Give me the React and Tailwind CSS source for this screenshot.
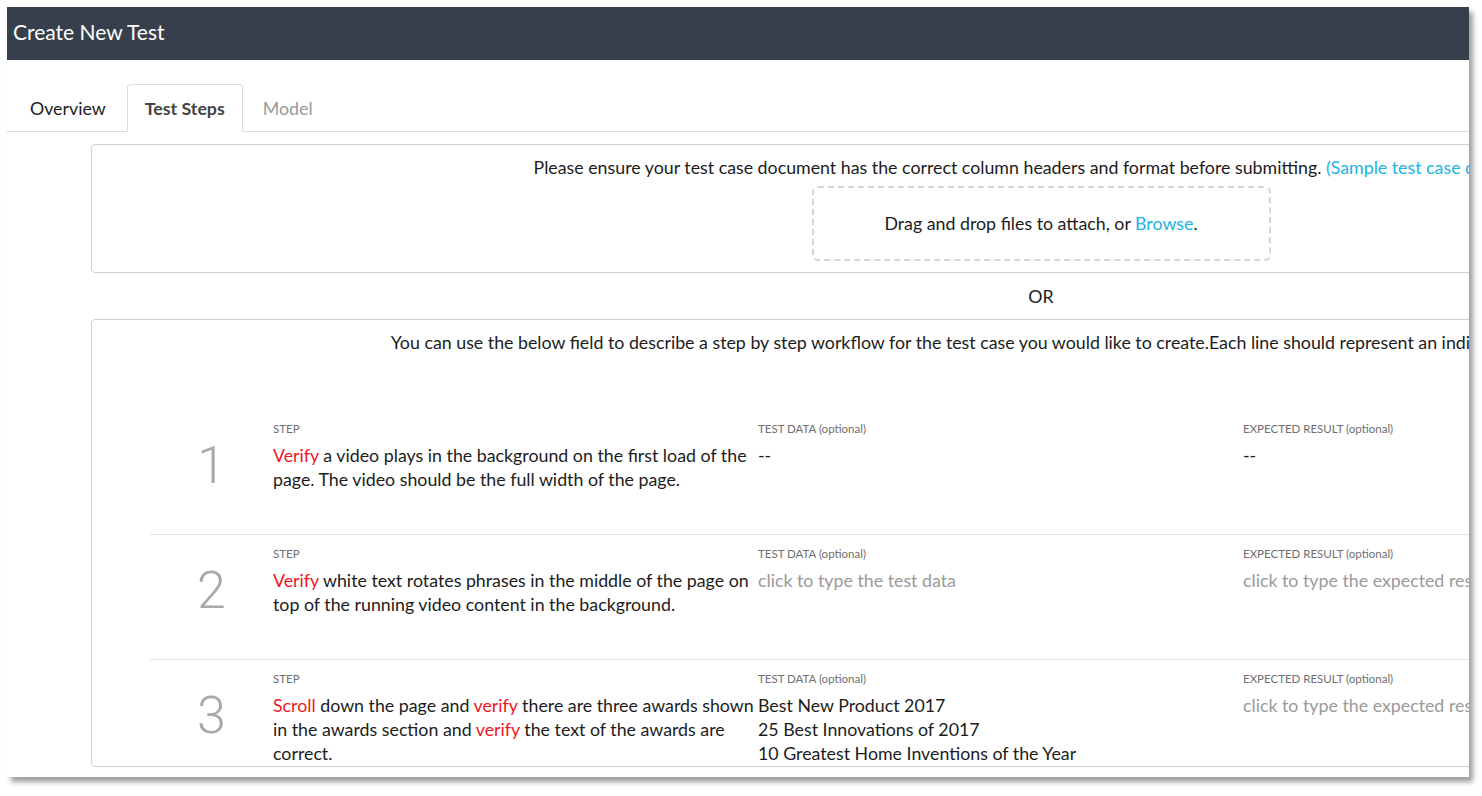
import React from 'react'

// Create New Test — pantalla de pasos de prueba

const steps = [
  {
    n: 1,
    parts: [['r', 'Verify'], ['t', ' a video plays in the background on the first load of the page. The video should be the full width of the page.']],
    data: ['--'],
    dataEmpty: false,
    result: '--',
    resultEmpty: false,
  },
  {
    n: 2,
    parts: [['r', 'Verify'], ['t', ' white text rotates phrases in the middle of the page on top of the running video content in the background.']],
    data: ['click to type the test data'],
    dataEmpty: true,
    result: 'click to type the expected result',
    resultEmpty: true,
  },
  {
    n: 3,
    parts: [
      ['r', 'Scroll'],
      ['t', ' down the page and '],
      ['r', 'verify'],
      ['t', ' there are three awards shown in the awards section and '],
      ['r', 'verify'],
      ['t', ' the text of the awards are correct.'],
    ],
    data: ['Best New Product 2017', '25 Best Innovations of 2017', '10 Greatest Home Inventions of the Year'],
    dataEmpty: false,
    result: 'click to type the expected result',
    resultEmpty: true,
  },
]

function StepRow({ step, last }) {
  return (
    <div
      className={`flex ${last ? 'pb-[2px]' : 'h-[125px] border-b border-[#e2e2e2]'}`}
    >
      <div className="w-[123px] shrink-0 flex justify-center pt-[30px]">
        <span className="text-[52px] leading-none font-light text-[#a9a9a9] font-['Roboto',sans-serif]">
          {step.n}
        </span>
      </div>
      <div className="w-[485px] shrink-0 pt-[12px]">
        <div className="text-[11.5px] leading-[14px] text-[#6f6f6f] mb-[7px]">STEP</div>
        <p className="text-[17.8px] leading-[24px] text-[#1c1c1c] pr-[2px]">
          {step.parts.map(([k, s], i) =>
            k === 'r' ? (
              <span key={i} className="text-[#f0141e]">{s}</span>
            ) : (
              <span key={i}>{s}</span>
            )
          )}
        </p>
      </div>
      <div className="w-[485px] shrink-0 pt-[12px]">
        <div className="text-[11.5px] leading-[14px] text-[#6f6f6f] mb-[7px]">TEST DATA (optional)</div>
        {step.data.map((d, i) => (
          <div
            key={i}
            className={`text-[17.8px] leading-[24px] ${step.dataEmpty ? 'text-[#9a9a9a]' : 'text-[#1c1c1c]'}`}
          >
            {d}
          </div>
        ))}
      </div>
      <div className="w-[485px] shrink-0 pt-[12px]">
        <div className="text-[11.5px] leading-[14px] text-[#6f6f6f] mb-[7px]">EXPECTED RESULT (optional)</div>
        <div
          className={`text-[17.8px] leading-[24px] whitespace-nowrap ${step.resultEmpty ? 'text-[#9a9a9a]' : 'text-[#1c1c1c]'}`}
        >
          {step.result}
        </div>
      </div>
    </div>
  )
}

export default function App() {
  return (
    <div className="w-[1482px] h-[796px] bg-white pt-[7px] pl-[7px] font-['Lato','Noto_Sans',sans-serif]">
      <div className="w-[1462px] h-[770px] overflow-hidden bg-white shadow-[4px_5px_5px_rgba(0,0,0,0.38)]">
        {/* Cabecera */}
        <div className="h-[53px] bg-[#363f4b] flex items-center pl-[6px] pb-[3px]">
          <h1 className="text-[21px] text-white">Create New Test</h1>
        </div>

        {/* Pestañas */}
        <div className="h-[72px] flex items-end pl-[5px] border-b border-[#dcdcdc]">
          <div className="flex gap-[3px] -mb-px">
            <div className="h-[48px] px-[18px] flex items-center text-[17.8px] text-[#222]">Overview</div>
            <div className="h-[48px] px-[17px] flex items-center text-[17.8px] font-bold text-[#444] bg-white border border-b-white border-[#dcdcdc] rounded-t-[4px]">
              Test Steps
            </div>
            <div className="h-[48px] px-[17px] flex items-center text-[17.8px] text-[#9a9a9a]">Model</div>
          </div>
        </div>

        {/* Contenido */}
        <div className="pl-[84px] pt-[12px]">
          <div className="w-[1900px] h-[129px] border border-[#cfcfcf] rounded-[4px] pt-[10px] flex flex-col items-center">
            <p className="text-[17.8px] leading-[24px] text-[#1c1c1c] whitespace-nowrap">
              Please ensure your test case document has the correct column headers and format before submitting.{' '}
              <span className="text-[#21b3e6]">(Sample test case document)</span>
            </p>
            <div className="mt-[7px] w-[459px] h-[75px] border-2 border-dashed border-[#d6d6d6] rounded-[6px] flex items-center justify-center text-[17.8px] text-[#1c1c1c]">
              <span>
                Drag and drop files to attach, or <span className="text-[#21b3e6]">Browse</span>.
              </span>
            </div>
          </div>

          <div className="w-[1900px] h-[46px] flex items-center justify-center text-[17.8px] text-[#1c1c1c]">OR</div>

          <div className="w-[1900px] h-[448px] border border-[#cfcfcf] rounded-[4px] pt-[10px]">
            <p className="text-center text-[17.8px] leading-[24px] text-[#1c1c1c] whitespace-nowrap">
              You can use the below field to describe a step by step workflow for the test case you would like to create.Each line should represent an individual step of your test case.
            </p>
            <div className="ml-[58px] mt-[56px]">
              {steps.map((s, i) => (
                <StepRow key={s.n} step={s} last={i === steps.length - 1} />
              ))}
            </div>
          </div>
        </div>
      </div>
    </div>
  )
}
